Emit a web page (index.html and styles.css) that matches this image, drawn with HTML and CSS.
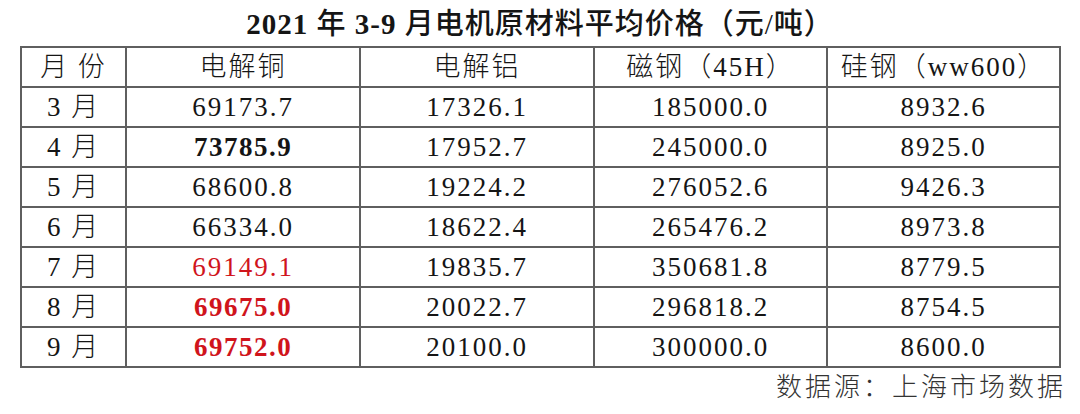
FILE: index.html
```html
<!DOCTYPE html>
<html lang="zh">
<head>
<meta charset="utf-8">
<title>2021年3-9月电机原材料平均价格</title>
<link rel="stylesheet" href="styles.css">
</head>
<body>
<div class="page">
  <h1 class="title"><span class="lat">2021</span> 年 <span class="lat">3-9</span> 月电机原材料平均价格（元/吨）</h1>
  <table class="grid">
    <colgroup>
      <col class="c-month">
      <col class="c-val">
      <col class="c-val">
      <col class="c-val2">
      <col class="c-val2">
    </colgroup>
    <thead>
      <tr><th>月 份</th><th>电解铜</th><th>电解铝</th><th>磁钢（45H）</th><th>硅钢（ww600）</th></tr>
    </thead>
    <tbody>
      <tr><td>3 月</td><td>69173.7</td><td>17326.1</td><td>185000.0</td><td>8932.6</td></tr>
      <tr><td>4 月</td><td class="strong">73785.9</td><td>17952.7</td><td>245000.0</td><td>8925.0</td></tr>
      <tr><td>5 月</td><td>68600.8</td><td>19224.2</td><td>276052.6</td><td>9426.3</td></tr>
      <tr><td>6 月</td><td>66334.0</td><td>18622.4</td><td>265476.2</td><td>8973.8</td></tr>
      <tr><td>7 月</td><td class="red">69149.1</td><td>19835.7</td><td>350681.8</td><td>8779.5</td></tr>
      <tr><td>8 月</td><td class="red strong">69675.0</td><td>20022.7</td><td>296818.2</td><td>8754.5</td></tr>
      <tr><td>9 月</td><td class="red strong">69752.0</td><td>20100.0</td><td>300000.0</td><td>8600.0</td></tr>
    </tbody>
  </table>
  <p class="source">数据源：上海市场数据</p>
</div>
</body>
</html>
```
FILE: styles.css
```css
html, body {
  margin: 0;
  padding: 0;
  background: #ffffff;
}
.page {
  width: 1080px;
  height: 414px;
  overflow: hidden;
  font-family: "Liberation Serif", "Noto Sans CJK SC", serif;
  color: #151515;
}
.title {
  margin: 0;
  height: 46px;
  box-sizing: border-box;
  padding-top: 8px;
  font-size: 29px;
  line-height: 32px;
  font-weight: 500;
  text-align: center;
  letter-spacing: 1px;
}
.title .lat {
  font-weight: 700;
}
.grid {
  margin-left: 20px;
  width: 1041px;
  table-layout: fixed;
  border-collapse: collapse;
  font-size: 27px;
  font-weight: 300;
}
.c-month { width: 105px; }
.c-val { width: 234px; }
.c-val2 { width: 233px; }
.grid th,
.grid td {
  border: 2px solid #5f5f5f;
  height: 38px;
  padding: 0;
  text-align: center;
  vertical-align: middle;
  font-weight: 300;
  letter-spacing: 2px;
  line-height: 36px;
}
.grid th {
  letter-spacing: 2px;
}
.grid td.strong {
  font-weight: 700;
  letter-spacing: 1.5px;
}
.grid td.red {
  color: #d0141c;
}
.source {
  margin: 2px 14px 0 0;
  text-align: right;
  font-size: 26px;
  line-height: 36px;
  letter-spacing: 3px;
  color: #333333;
  font-weight: 300;
}
```
